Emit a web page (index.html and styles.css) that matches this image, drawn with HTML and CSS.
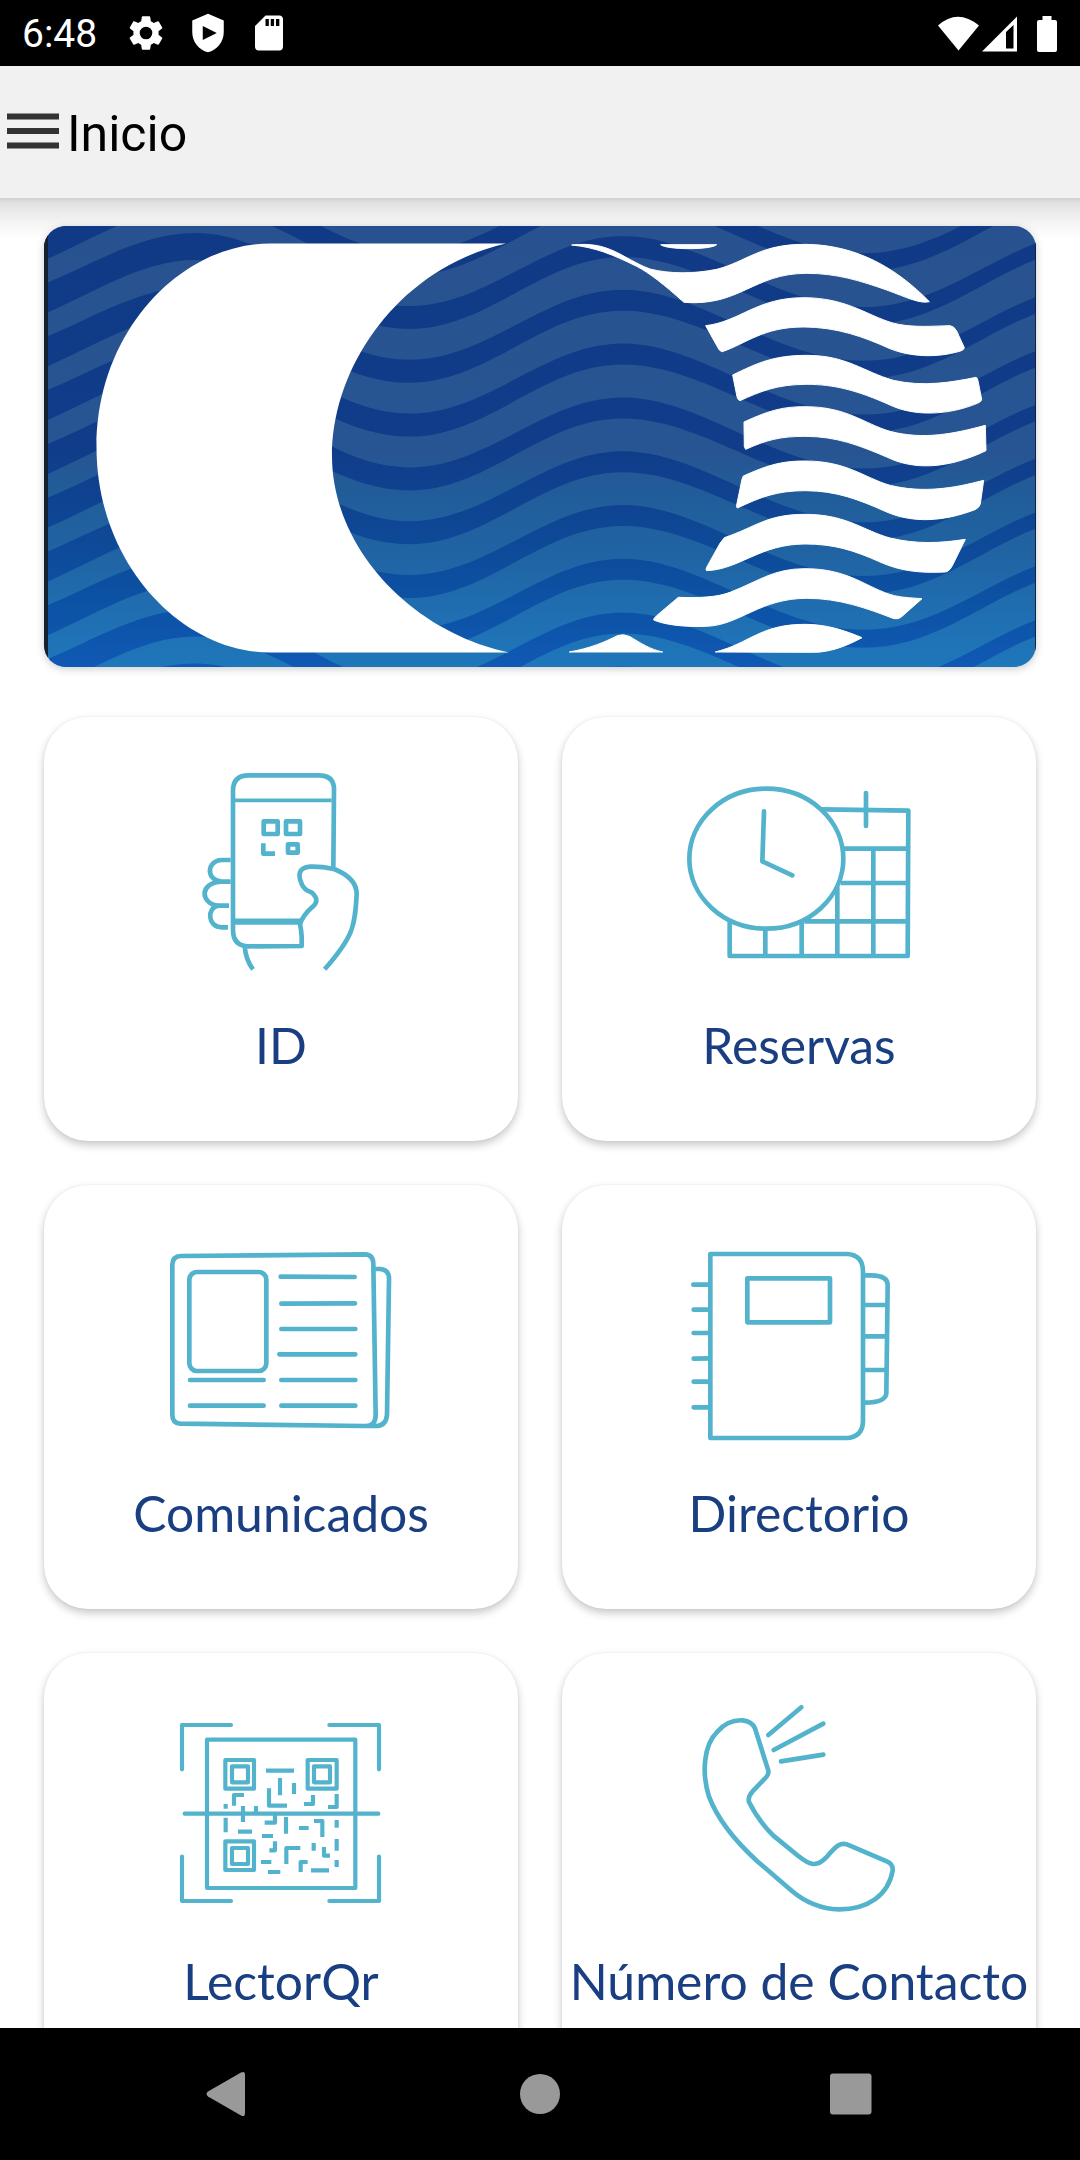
FILE: index.html
```html
<!DOCTYPE html>
<html lang="es">
  <head>
    <meta charset="UTF-8" />
    <title>Inicio</title>
    <meta name="viewport" content="width=device-width, initial-scale=1.0" />
    <link rel="stylesheet" href="styles.css">
  </head>
  <body>
    <div class="status-bar">
      <span class="clock">6:48</span>
      <svg class="status-icon" viewBox="0 0 24 24">
        <path d="M19.14 12.94c.04-.3.06-.61.06-.94 0-.32-.02-.64-.07-.94l2.03-1.58a.49.49 0 0 0 .12-.61l-1.92-3.32a.488.488 0 0 0-.59-.22l-2.39.96c-.5-.38-1.03-.7-1.62-.94l-.36-2.54a.484.484 0 0 0-.48-.41h-3.84c-.24 0-.43.17-.47.41l-.36 2.54c-.59.24-1.13.57-1.62.94l-2.39-.96c-.22-.08-.47 0-.59.22L2.74 8.87c-.12.21-.08.47.12.61l2.03 1.58c-.05.3-.09.63-.09.94s.02.64.07.94l-2.03 1.58a.49.49 0 0 0-.12.61l1.92 3.32c.12.22.37.29.59.22l2.39-.96c.5.38 1.03.7 1.62.94l.36 2.54c.05.24.24.41.48.41h3.84c.24 0 .44-.17.47-.41l.36-2.54c.59-.24 1.13-.56 1.62-.94l2.39.96c.22.08.47 0 .59-.22l1.92-3.32c.12-.22.07-.47-.12-.61l-2.01-1.58zM12 15.6A3.6 3.6 0 1 1 12 8.400a3.600 3.600 0 0 1 0 7.200z" />
      </svg>
      <svg class="status-icon" viewBox="0 0 24 24">
        <path fill-rule="evenodd" d="M12 1 3 4.800v6.700C3 17 6.800 21.500 12 23c5.200-1.500 9-6 9-11.500V4.800L12 1zM9 8v8l8-4-8-4z" />
      </svg>
      <svg class="status-icon" viewBox="0 0 24 24">
        <path fill-rule="evenodd" d="M18 2h-8L4 8v12c0 1.100.9 2 2 2h12c1.100 0 2-.9 2-2V4c0-1.100-.9-2-2-2zM10 4h1.900v4H10zM13 4h1.900v4H13zM16 4h1.900v4H16z" />
      </svg>
      <svg class="signals" viewBox="0 0 122 40">
        <path d="M2 12.500Q21.500-5 43 12.500L22.500 37.500z" />
        <path fill-rule="evenodd" d="M46 38.500 81 3.500v35zM70 19v16.500h7.500V12z" />
        <path d="M106.500 3h9v4h3.500q2 0 2 2v28q0 2-2 2h-16q-2 0-2-2V9q0-2 2-2h3.500z" />
      </svg>
    </div>

    <header class="app-bar">
      <svg class="menu-icon" viewBox="0 0 52 36">
        <path d="M0 3.500h52M0 18h52M0 32.500h52" />
      </svg>
      <h1>Inicio</h1>
    </header>

    <main class="content">
      <div class="banner">
        <svg viewBox="0 0 992 441">
          <defs>
            <linearGradient id="sea" x1="0" y1="0" x2="0" y2="1">
              <stop offset="0" stop-color="#28528f" />
              <stop offset="0.52" stop-color="#275593" />
              <stop offset="0.6" stop-color="#215c99" />
              <stop offset="0.75" stop-color="#2064a4" />
              <stop offset="0.9" stop-color="#1f70b3" />
              <stop offset="1" stop-color="#1e77ba" />
            </linearGradient>
            <linearGradient id="deep" gradientUnits="userSpaceOnUse" x1="0" y1="0" x2="0" y2="441">
              <stop offset="0" stop-color="#103a86" />
              <stop offset="0.5" stop-color="#103c89" />
              <stop offset="0.7" stop-color="#0e4896" />
              <stop offset="0.85" stop-color="#0c52a4" />
              <stop offset="1" stop-color="#1059b4" />
            </linearGradient>
            <path id="band" d="M-80 76C5 76 70 7 151 7S285 80 365 80S500 10 579 10S730 81 820 81S965 6 1050 6V22C965 22 910 99 820 99S660 31 579 31S445 103 365 103S230 34 151 34S5 107-80 107z" />
            <clipPath id="waves">
              <use href="#band" y="-107.600" />
              <use href="#band" y="-53.800" />
              <use href="#band" />
              <use href="#band" y="53.800" />
              <use href="#band" y="107.600" />
              <use href="#band" y="161.400" />
              <use href="#band" y="215.200" />
              <use href="#band" y="269" />
              <use href="#band" y="322.800" />
              <use href="#band" y="376.600" />
              <use href="#band" y="430.400" />
            </clipPath>
          </defs>
          <rect width="992" height="441" fill="url(#sea)" />
          <rect width="992" height="441" fill="url(#deep)" clip-path="url(#waves)" />
          <rect width="4" height="441" fill="#14222f" />
          <rect x="991" width="1" height="441" fill="#14223f" />

          <!-- crescent -->
          <path fill="#fff" d="M462 17.500H226C138 17.500 52.500 104 52.500 221S138 426.500 226 426.500H465C365 405 288 320 288 230S355 42 462 17.500z" />

          <!-- white waves -->
          <g class="white-waves" transform="translate(496 -16) scale(.33333)">
            <path d="M362 104H530C512 120 382 120 362 104z" />
            <path d="M95 105C210 92 245 145 330 177C390 192 460 192 530 178C620 155 660 102 795 103C950 104 1070 175 1168 275C1140 282 1100 262 1040 240C960 212 890 190 800 190C640 190 600 290 432 277C370 222 330 190 290 169C215 132 165 112 95 105z" />
            <path d="M497 347C600 335 650 263 790 263C930 263 990 325 1075 343C1130 353 1180 348 1230 347Q1242 348 1250 363L1273 413Q1273 419 1262 423C1190 445 1110 440 1050 416C970 380 890 351 790 351C670 351 620 400 547 425Q541 425 536 417z" />
            <path d="M578 495C650 460 700 436 800 436C920 436 970 485 1060 511C1150 532 1240 516 1308 502Q1312 503 1314 512L1325 568Q1325 575 1312 580C1220 618 1120 618 1050 585C950 540 880 523 800 523C710 523 660 545 600 572Q594 571 591 560z" />
            <path d="M612 636C690 600 730 590 795 590C920 590 970 640 1050 664C1150 690 1240 672 1336 646L1338 722C1220 778 1120 780 1040 741C960 707 890 679 795 679C720 679 680 690 617 718L613 710z" />
            <path d="M610 798C690 762 730 753 795 753C920 753 970 802 1050 826C1150 850 1240 835 1331 811L1321 882Q1318 893 1305 899C1210 935 1120 940 1040 906C960 870 890 842 795 842C710 842 660 862 592 894Q589 892 590 885L606 808z" />
            <path d="M553 983C650 950 680 913 795 913C920 913 970 962 1050 984C1130 1003 1200 1000 1276 988L1238 1065Q1228 1085 1216 1086C1140 1090 1080 1083 1020 1056C940 1020 880 1002 795 1002C660 1002 600 1078 500 1082Q496 1080 500 1072L540 1000z" />
            <path d="M415 1162C480 1164 530 1162 570 1147C660 1112 700 1076 795 1076C930 1076 980 1135 1063 1157C1090 1163 1120 1164 1146 1166L1085 1220Q1076 1229 1062 1226C980 1195 900 1165 800 1165C660 1165 600 1245 500 1249C430 1252 370 1243 341 1230Q340 1226 350 1217z" />
            <path d="M88 1326C150 1315 195 1296 232 1277Q250 1270 270 1280C300 1298 330 1318 368 1326z" />
            <path d="M526 1326C630 1300 660 1243 795 1243C860 1243 910 1260 966 1283C920 1308 870 1327 820 1327z" />
          </g>
        </svg>
      </div>

      <div class="menu-grid">
        <a class="card" href="#">
          <svg class="card-icon" viewBox="393 171 720 660">
            <path d="M910 505 912 268Q912 226 866 226H656Q609 226 609 272V690Q609 738 656 739L815 738V710Q814 692 810 672Q820 645 846 622Q872 602 846 578C835 573 824 571 816 554C802 525 806 503 840 500C870 499 888 502 912 507C950 522 980 545 980 582C975 680 970 710 884 808" />
            <path d="M602 480H575C528 482 528 542 575 545H602M575 545C505 548 512 612 565 617H597M565 617C530 622 532 682 575 682H594M644 740Q648 780 669 808" />
            <path stroke-width="11" d="M615 301H905" />
            <path stroke-width="19" d="M612 665H815" />
            <path d="M701 364H743V402H701zM768 364H810V402H768zM774 433H803V458H774zM700 430V461H735" />
          </svg>
          <span>ID</span>
        </a>
        <a class="card" href="#">
          <svg class="card-icon" viewBox="417 171 720 660">
            <ellipse cx="679" cy="476" rx="231" ry="210" />
            <path stroke-linecap="round" d="M672 334 667 484 757 526M978 279V378" />
            <path d="M846 328 1105 332 1103 768H569V665M912 446H1105M902 549H1105M793 664H1105M676 690V768M785 665V768M892 560V768M1000 446V768" />
          </svg>
          <span>Reservas</span>
        </a>
        <a class="card" href="#">
          <svg class="card-icon" viewBox="393 165 720 660">
            <path d="M452 258 1005 253Q1030 254 1030 282L1037 735Q1037 769 1005 768L450 761Q427 759 427 735V284Q428 259 452 258zM1035 297H1050Q1077 299 1077 326L1071 735Q1068 768 1038 768H1005" />
            <rect x="478" y="306" width="231" height="297" rx="23" />
            <path stroke-linecap="round" d="M752 320 974 321M754 401 975 400M754 477H976M748 553H976M754 630H976M754 707H976M480 630H701M480 707H701" />
          </svg>
          <span>Comunicados</span>
        </a>
        <a class="card" href="#">
          <svg class="card-icon" viewBox="417 165 720 660">
            <path d="M511 252H920Q969 254 969 305V755Q967 800 923 804H511zM969 316H995Q1043 317 1043 345L1039 670Q1037 697 975 698H969M969 405H1043M969 499H1043M969 600H1041" />
            <path d="M622 325H870V457H622z" />
            <path stroke-linecap="round" d="M460 344H508M461 419H508M461 489H508M461 566 508 565M461 635H508M461 712H508" />
          </svg>
          <span>Directorio</span>
        </a>
        <a class="card" href="#">
          <svg class="card-icon qr-icon" viewBox="33 9 720 660">
            <path stroke-linecap="round" d="M96 238V105H243M538 105H687V238M96 500V633H243M538 633H687V500M104 371H685" />
            <path d="M171 149H616V594H171z" />
            <path d="M226 210H312V296H226zM246 229H294V277H246zM473 210H560V296H473zM492 229H540V277H492zM226 454H312V540H226zM246 474H294V522H246z" />
            <path d="M348 242H432M390 264V316M432 279V312M357 295V347H411M252 347V315H282M462 342H489V315M534 351H560V312M227 342V356M279 348V396M318 348V368M227 383V427M264 425H306M344 398H375V375M408 381V431M336 438H369M447 414H476M492 393H517V441M560 390V413M358 481H375V454M333 516H364M354 546H391M409 522V474H451M491 459V482M522 471V497H540M560 447V482M560 510V531M452 546V516H473M483 541H537" />
          </svg>
          <span>LectorQr</span>
        </a>
        <a class="card" href="#">
          <svg class="card-icon" viewBox="417 159 720 660">
            <path d="M645 265 685 392Q687 402 679 411L637 455Q623 471 627 486C645 522 665 552 700 587L775 648C810 676 830 682 858 653C885 622 900 602 928 616L1042 665Q1060 673 1058 692C1045 765 985 808 897 808C840 806 795 786 755 752L650 662C580 598 530 530 507 470C485 400 490 315 533 274C560 244 590 240 608 241Q636 244 645 265z" />
            <path stroke-linecap="round" d="M685 285 784 202M701 330 850 251M723 364 850 344" />
          </svg>
          <span>Número de Contacto</span>
        </a>
      </div>
    </main>

    <nav class="nav-bar">
      <svg viewBox="0 0 44 46">
        <path d="M2 20.500 35 1.500Q39-.5 39 4V42Q39 46.500 35 44.500L2 25.500Q-1 23 2 20.500z" />
      </svg>
      <svg viewBox="0 0 44 46"><circle cx="22" cy="23" r="20" /></svg>
      <svg viewBox="0 0 44 46"><rect x="1" y="2.500" width="41.500" height="41" rx="3" /></svg>
    </nav>
  </body>
</html>
```
FILE: styles.css
```css
* {
  box-sizing: border-box;
}

body {
  margin: 0;
  width: 1080px;
  height: 2160px;
  display: flex;
  flex-direction: column;
  overflow: hidden;
  background-color: #fff;
  font-family: Roboto, sans-serif;
}

.status-bar {
  display: flex;
  align-items: center;
  flex: none;
  height: 66px;
  padding: 0 22px;
  background-color: #000;
  color: #fff;
}

.status-bar svg {
  fill: #fff;
}

.clock {
  width: 103px;
  padding-top: 2px;
  font-size: 39px;
  line-height: 66px;
}

.status-icon {
  width: 42px;
  height: 42px;
  margin-right: 19.5px;
}

.signals {
  width: 122px;
  height: 40px;
  margin-left: auto;
}

.app-bar {
  display: flex;
  align-items: center;
  gap: 8px;
  flex: none;
  height: 132px;
  padding-left: 7px;
  background-color: #f1f1f1;
}

.menu-icon {
  width: 52px;
  height: 36px;
  margin-bottom: 3px;
  stroke: #333;
  stroke-width: 6;
}

.app-bar h1 {
  margin: 4px 0 0;
  font-size: 50px;
  font-weight: 400;
  color: #000;
}

.content {
  flex: 1;
  min-height: 0;
  overflow: hidden;
  padding: 28px 44px 0;
  background: linear-gradient(#d2d2d2 0, #d6d6d6 2px, #dfdfdf 4px, #e9e9e9 12px, #f5f5f5 26px, #fff 40px);
}

.banner {
  height: 441px;
  border-radius: 22px;
  overflow: hidden;
  box-shadow: 0 2px 8px rgba(0, 0, 0, 0.2);
}

.banner svg {
  display: block;
  width: 992px;
  height: 441px;
}

.white-waves {
  fill: #fff;
  stroke: #fff;
  stroke-width: 3;
  stroke-linejoin: round;
}

.menu-grid {
  display: grid;
  grid-template-columns: 1fr 1fr;
  gap: 44px;
  margin-top: 50px;
}

.card {
  display: flex;
  flex-direction: column;
  align-items: center;
  height: 424px;
  padding-top: 40px;
  border-radius: 44px;
  background-color: #fff;
  box-shadow: 0 4px 9px rgba(0, 0, 0, 0.22), 0 0 2px rgba(0, 0, 0, 0.08);
  color: #1a3e82;
  text-decoration: none;
}

.card-icon {
  width: 240px;
  height: 220px;
  fill: none;
  stroke: #53b3cc;
  stroke-width: 14;
  stroke-linejoin: round;
}

.qr-icon {
  stroke-width: 12.5;
}

.card span {
  margin-top: 38px;
  font-family: Lato, sans-serif;
  font-size: 49.8px;
  line-height: 60px;
  white-space: nowrap;
}

.nav-bar {
  display: flex;
  align-items: center;
  justify-content: space-between;
  flex: none;
  height: 132px;
  padding: 0 207px 0 206px;
  background-color: #000;
}

.nav-bar svg {
  width: 44px;
  height: 46px;
  fill: #999;
}
```
